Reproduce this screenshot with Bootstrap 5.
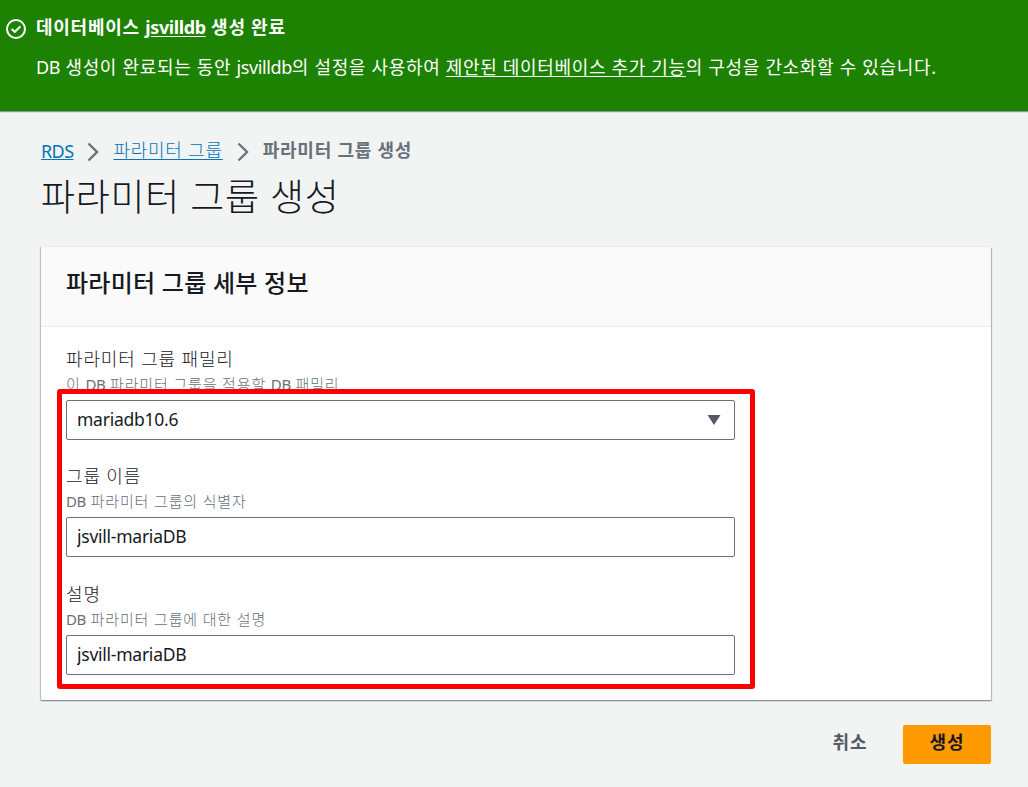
<!DOCTYPE html>
<html lang="ko">
<head>
  <meta charset="UTF-8">
  <meta name="viewport" content="width=device-width, initial-scale=1.0">
  <title>파라미터 그룹 생성</title>
  <link href="https://cdn.jsdelivr.net/npm/bootstrap@5.3.0/dist/css/bootstrap.min.css" rel="stylesheet">
  <style>
    body {
      background: #f2f3f3;
      color: #16191f;
      font-family: "Noto Sans", "Noto Sans CJK KR", sans-serif;
      font-size: 18px;
      line-height: 24px;
      letter-spacing: 0.75px;
      overflow: hidden;
    }
    /* latin words run tighter than the hangul around them */
    .latin {
      letter-spacing: -0.4px;
    }
    .flash {
      height: 111px;
      background: #1d8102;
      padding: 15px 6px 0;
      gap: 10px;
      box-shadow: 0 1px 1px #879596;
    }
    .flash svg {
      margin-top: 4px;
    }
    .flash p {
      margin: 16px 0 0;
      letter-spacing: 0.67px;
    }
    .flash a {
      color: #fff;
      text-underline-offset: 2px;
    }
    .page {
      padding: 27px 37px 0 41px;
    }
    .trail {
      gap: 14px;
    }
    .trail a {
      color: #0073bb;
      text-underline-offset: 2px;
    }
    .trail .latin {
      padding-top: 1px;
      margin-bottom: -1px;
      letter-spacing: -0.6px;
      text-underline-offset: 1px;
    }
    .trail span {
      color: #687078;
    }
    .trail svg {
      margin-top: 3px;
    }
    .page-title {
      font-size: 37px;
      font-weight: 300;
      line-height: 44px;
      letter-spacing: 0.7px;
      margin: 13px 0 28px;
    }
    .panel {
      border: 0;
      border-radius: 0;
      height: 453px;
      box-shadow: 0 1px 1px #879596, 1px 1px 1px #b8bfc0, -1px 0 1px #c4cbcc;
    }
    .panel .card-header {
      flex: none;
      height: 80px;
      background: #fafafa;
      border-bottom: 1px solid #eaeded;
      border-radius: 0;
      padding: 20px 25px;
    }
    .panel h2 {
      font-size: 24px;
      font-weight: 500;
      line-height: 32px;
      letter-spacing: 0.25px;
      margin: 0;
    }
    .panel .card-body {
      padding: 18.75px 25px 0;
    }
    .field {
      width: 669px;
      margin-bottom: 23.5px;
    }
    .field label {
      display: block;
      font-weight: 300;
      line-height: 26px;
      letter-spacing: 0.85px;
    }
    .field .hint {
      font-size: 15px;
      font-weight: 300;
      line-height: 24px;
      letter-spacing: 0.85px;
      color: #687078;
      margin-bottom: 4px;
    }
    .field .hint .latin {
      font-weight: 400;
    }
    .field .entry {
      height: 40px;
      border: 1px solid #687078;
      border-radius: 2px;
      padding: 0 10px 2px;
      background: #fff;
      color: #16191f;
      font-size: 17.5px;
      letter-spacing: -0.25px;
    }
    .field .entry svg {
      margin-top: 2px;
    }
    .marker {
      left: 16px;
      top: 142px;
      width: 698px;
      height: 300px;
      border: 5px solid #f00;
      border-radius: 3px;
    }
    .actions {
      margin-top: 25px;
    }
    .actions .btn {
      height: 39px;
      width: 88px;
      border: 0;
      border-radius: 2px;
      padding: 0 0 5px;
      font-size: 18px;
      font-weight: 700;
      line-height: 34px;
      letter-spacing: 1px;
    }
    .actions .btn-plain {
      color: #545b64;
      margin-right: 9px;
    }
    .actions .btn-create {
      background: #f90;
      color: #16191f;
    }
  </style>
</head>
<body>
  <div class="flash d-flex align-items-start text-white">
    <svg width="20" height="20" viewBox="0 0 20 20" fill="none" stroke="#fff" stroke-width="2">
      <circle cx="10" cy="10" r="9"/>
      <path d="M5.6 10l3.2 2.8 5.600-5.400"/>
    </svg>
    <div class="text-nowrap">
      <strong class="d-block">데이터베이스 <a href="#" class="latin">jsvilldb</a> 생성 완료</strong>
      <p><span class="latin">DB</span> 생성이 완료되는 동안 <span class="latin">jsvilldb</span>의 설정을 사용하여 <a href="#">제안된 데이터베이스 추가 기능</a>의 구성을 간소화할 수 있습니다.</p>
    </div>
  </div>

  <main class="page">
    <nav class="trail d-flex align-items-center">
      <a href="#" class="latin">RDS</a>
      <svg width="12" height="20" viewBox="0 0 12 20" fill="none" stroke="#687078" stroke-width="2.4"><path d="M1.5 1.5L10 10l-8.5 8.5"/></svg>
      <a href="#" class="fw-light">파라미터 그룹</a>
      <svg width="12" height="20" viewBox="0 0 12 20" fill="none" stroke="#687078" stroke-width="2.4"><path d="M1.5 1.5L10 10l-8.5 8.5"/></svg>
      <span class="fw-bold">파라미터 그룹 생성</span>
    </nav>
    <h1 class="page-title">파라미터 그룹 생성</h1>

    <form>
      <div class="card panel">
        <div class="card-header">
          <h2>파라미터 그룹 세부 정보</h2>
        </div>
        <div class="card-body">
          <div class="field">
            <label>파라미터 그룹 패밀리</label>
            <div class="hint">이 <span class="latin">DB</span> 파라미터 그룹을 적용할 <span class="latin">DB</span> 패밀리</div>
            <div class="entry d-flex align-items-center justify-content-between">
              <span>mariadb10.6</span>
              <svg width="20" height="12" viewBox="0 0 20 12" fill="#545b64"><path d="M3.5 1h13L10 11z"/></svg>
            </div>
          </div>
          <div class="field">
            <label for="groupName">그룹 이름</label>
            <div class="hint"><span class="latin">DB</span> 파라미터 그룹의 식별자</div>
            <input type="text" class="entry w-100" id="groupName" value="jsvill-mariaDB">
          </div>
          <div class="field mb-0">
            <label for="groupDesc">설명</label>
            <div class="hint"><span class="latin">DB</span> 파라미터 그룹에 대한 설명</div>
            <input type="text" class="entry w-100" id="groupDesc" value="jsvill-mariaDB">
          </div>
        </div>
        <div class="marker position-absolute pe-none"></div>
      </div>
      <div class="actions d-flex justify-content-end">
        <button type="button" class="btn btn-plain">취소</button>
        <button type="submit" class="btn btn-create">생성</button>
      </div>
    </form>
  </main>
  <script src="https://cdn.jsdelivr.net/npm/bootstrap@5.3.0/dist/js/bootstrap.bundle.min.js"></script>
</body>
</html>
